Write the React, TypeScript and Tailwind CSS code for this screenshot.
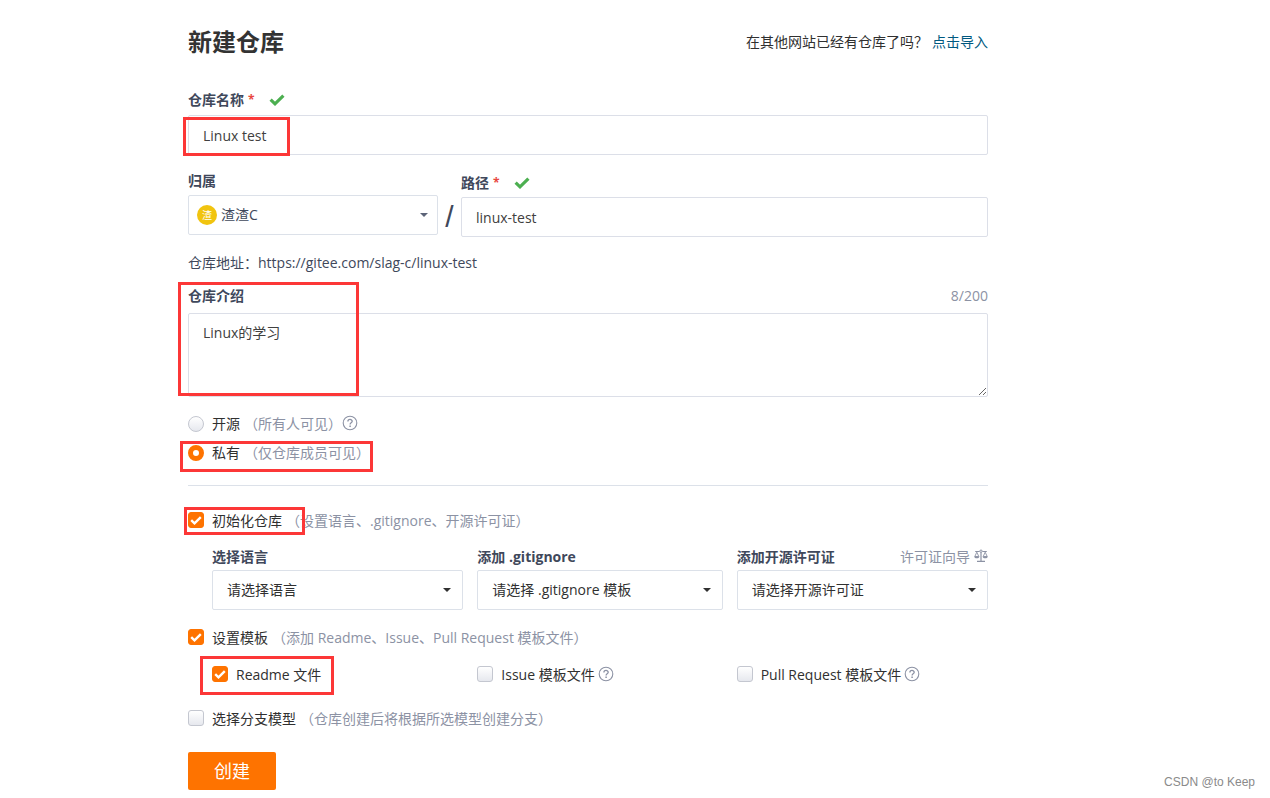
import React, { useState } from 'react';
import clsx from 'clsx';

interface MarkProps {
  className: string;
}

// Red highlight frame laid over a part of the form
const Mark: React.FC<MarkProps> = ({ className }) => (
  <span aria-hidden="true" className={clsx('pointer-events-none absolute z-10 border-3 border-[#fc3737]', className)} />
);

const TickIcon: React.FC<{ className?: string }> = ({ className }) => (
  <svg viewBox="0 0 16 12" className={className} fill="none" stroke="currentColor" aria-hidden="true">
    <path d="M1.6 5.6 L6 9.8 L14.4 1.6" strokeWidth="3.2" />
  </svg>
);

const HelpIcon: React.FC = () => (
  <svg viewBox="0 0 16 16" className="mb-0.5 h-4 w-4 shrink-0 text-[#8c92a4]" fill="none" stroke="currentColor" aria-hidden="true">
    <circle cx="8" cy="8" r="6.8" strokeWidth="1.1" />
    <path d="M5.9 6.4 C5.9 3.8 10.2 3.8 10.2 6.3 C10.2 7.8 8.1 7.8 8.1 9.4" strokeWidth="1.3" />
    <path d="M8.1 10.5 V12" strokeWidth="1.5" />
  </svg>
);

const ScaleIcon: React.FC = () => (
  <svg viewBox="0 0 14 14" className="mb-0.5 h-3.5 w-3.5 shrink-0" fill="none" stroke="currentColor" aria-hidden="true">
    <path d="M1.2 2.5 H5.5 M8.5 2.5 H12.8 M7 3.5 V12 M3 12.4 H11" strokeWidth="1.2" />
    <circle cx="7" cy="2.2" r="1.2" strokeWidth="1" />
    <path d="M2.8 3.2 L0.8 7.5 H4.8 Z M11.2 3.2 L9.2 7.5 H13.2 Z" strokeWidth="0.9" />
    <path d="M0.2 7.4 H5.4 C5.2 10 0.4 10 0.2 7.4 Z M8.6 7.4 H13.8 C13.6 10 8.8 10 8.6 7.4 Z" fill="currentColor" stroke="none" />
  </svg>
);

const Required: React.FC = () => (
  <>
    <span className="ml-1 text-xs text-[#e8473f]">*</span>
    <TickIcon className="ml-3.5 h-3 w-4 text-[#4caf50]" />
  </>
);

interface SelectBoxProps {
  id: string;
  option: string;
  className?: string;
  caretClassName?: string;
}

const SelectBox: React.FC<SelectBoxProps> = ({ id, option, className, caretClassName }) => (
  <div className="grid items-center">
    <select
      id={id}
      className={clsx('col-start-1 row-start-1 h-10 w-full appearance-none rounded-xs border border-[#dce1e9] bg-white pr-8', className)}
    >
      <option>{option}</option>
    </select>
    <svg
      viewBox="0 0 8 4"
      className={clsx('pointer-events-none col-start-1 row-start-1 h-1 w-2 justify-self-end', caretClassName)}
      fill="currentColor"
      aria-hidden="true"
    >
      <path d="M0 0 H8 L4 4 Z" />
    </svg>
  </div>
);

interface CheckItemProps {
  label: string;
  hint?: string;
  defaultChecked?: boolean;
  help?: boolean;
}

const CheckItem: React.FC<CheckItemProps> = ({ label, hint, defaultChecked, help }) => (
  <label className="flex h-5 items-center">
    <span className="mr-2 mb-0.5 grid place-items-center">
      <input
        type="checkbox"
        defaultChecked={defaultChecked}
        className="peer col-start-1 row-start-1 h-4 w-4 appearance-none rounded-[3px] border border-[#c4c7d0] bg-linear-to-b from-white to-[#e6e8ee] checked:border-[#fe7300] checked:bg-[#fe7300] checked:bg-none"
      />
      <TickIcon className="invisible col-start-1 row-start-1 h-[9px] w-3 text-white peer-checked:visible" />
    </span>
    <span>{label}</span>
    {hint && <span className="ml-1 text-[#8c92a4]">{hint}</span>}
    {help && <span className="ml-[3px]"><HelpIcon /></span>}
  </label>
);

interface RadioItemProps {
  value: string;
  label: string;
  hint: string;
  checked: boolean;
  onChange: (value: string) => void;
  help?: boolean;
}

const RadioItem: React.FC<RadioItemProps> = ({ value, label, hint, checked, onChange, help }) => (
  <label className="flex h-5 items-center">
    <input
      type="radio"
      name="visibility"
      checked={checked}
      onChange={() => onChange(value)}
      className="mr-2 h-4 w-4 appearance-none rounded-full border border-[#c4c7d0] bg-linear-to-b from-white to-[#e6e8ee] checked:border-5 checked:border-[#fe7300] checked:bg-white checked:bg-none"
    />
    <span>{label}</span>
    <span className="ml-1 text-[#8c92a4]">{hint}</span>
    {help && <HelpIcon />}
  </label>
);

const labelClass = 'flex h-5 items-center font-bold text-[#40485b]';
const inputClass = 'block w-full rounded-xs border border-[#dcdfe8] bg-white px-3.5 text-[#404040]';

const App: React.FC = () => {
  const [visibility, setVisibility] = useState('private');
  const [intro, setIntro] = useState('Linux的学习');

  return (
    <div className="relative min-h-screen bg-white font-['Open_Sans','Noto_Sans_CJK_SC',sans-serif] text-sm leading-5 text-[#303030]">
      <form className="max-w-[988px] pt-6 pb-2 pl-[188px]" onSubmit={(e) => e.preventDefault()}>
        <header className="mb-[30px] flex h-9 items-center justify-between">
          <h1 className="text-2xl font-bold text-[#333333]">新建仓库</h1>
          <p>
            在其他网站已经有仓库了吗？
            <a href="#import" className="ml-1 text-[#005980]">点击导入</a>
          </p>
        </header>

        {/* Name */}
        <label htmlFor="name" className={clsx(labelClass, 'mb-[5px]')}>
          仓库名称
          <Required />
        </label>
        <div className="relative">
          <input id="name" defaultValue="Linux test" className={clsx(inputClass, 'h-10')} />
          <Mark className="top-0.5 -left-[5px] h-[39px] w-[107px]" />
        </div>

        {/* Owner and path */}
        <div className="mt-4 flex">
          <div className="w-[250px]">
            <label htmlFor="owner" className={clsx(labelClass, 'mb-1')}>归属</label>
            <div className="grid items-center">
              <div className="col-start-1 row-start-1">
                <SelectBox id="owner" option="渣渣C" className="pl-8 text-[#40485b]" caretClassName="mr-2.5 text-[#5c6478]" />
              </div>
              <span className="pointer-events-none col-start-1 row-start-1 ml-[9px] flex h-5 w-5 items-center justify-center rounded-full bg-[#f1c40f] text-[10px] text-white">
                渣
              </span>
            </div>
          </div>
          <span className="flex w-[23px] justify-center pt-[34px] font-['Liberation_Sans',sans-serif] text-3xl leading-6 text-[#40485b]">/</span>
          <div className="flex-1">
            <label htmlFor="path" className={clsx(labelClass, 'mt-0.5 mb-1')}>
              路径
              <Required />
            </label>
            <input id="path" defaultValue="linux-test" className={clsx(inputClass, 'h-10')} />
          </div>
        </div>

        <p className="mt-4 text-[#40485b]">仓库地址：https://gitee.com/slag-c/linux-test</p>

        {/* Intro */}
        <div className="relative mt-[13px]">
          <div className="mb-[7px] flex justify-between">
            <label htmlFor="intro" className={labelClass}>仓库介绍</label>
            <span className="text-[#8c92a4]">{intro.length}/200</span>
          </div>
          <textarea
            id="intro"
            value={intro}
            maxLength={200}
            onChange={(e) => setIntro(e.target.value)}
            className={clsx(inputClass, 'h-[84px] resize-y py-[9px]')}
          />
          <Mark className="-top-1 -left-2.5 h-[114px] w-[181px]" />
        </div>

        {/* Visibility */}
        <div className="mt-[17px] flex flex-col items-start gap-[9px]">
          <RadioItem value="public" label="开源" hint="（所有人可见）" checked={visibility === 'public'} onChange={setVisibility} help />
          <div className="relative">
            <RadioItem value="private" label="私有" hint="（仅仓库成员可见）" checked={visibility === 'private'} onChange={setVisibility} />
            <Mark className="-top-0.5 -left-2 h-[31px] w-[193px]" />
          </div>
        </div>

        <hr className="mt-[22px] border-[#dce1e9]" />

        {/* Initialize */}
        <div className="relative mt-[25px]">
          <CheckItem label="初始化仓库" hint="（设置语言、.gitignore、开源许可证）" defaultChecked />
          <Mark className="-top-1 -left-1 h-7 w-[121px]" />
        </div>
        <div className="mt-4 grid grid-cols-[251fr_245fr_251fr] gap-3.5 pl-6">
          <div>
            <label htmlFor="language" className={clsx(labelClass, 'mb-[3px]')}>选择语言</label>
            <SelectBox id="language" option="请选择语言" className="pl-3.5" caretClassName="mr-3" />
          </div>
          <div>
            <label htmlFor="gitignore" className={clsx(labelClass, 'mb-[3px]')}>添加 .gitignore</label>
            <SelectBox id="gitignore" option="请选择 .gitignore 模板" className="pl-3.5" caretClassName="mr-3" />
          </div>
          <div>
            <div className="mb-[3px] flex justify-between">
              <label htmlFor="license" className={labelClass}>添加开源许可证</label>
              <a href="#license-guide" className="flex items-center gap-1 text-[#8c92a4]">
                许可证向导
                <ScaleIcon />
              </a>
            </div>
            <SelectBox id="license" option="请选择开源许可证" className="pl-3.5" caretClassName="mr-3" />
          </div>
        </div>

        {/* Templates */}
        <div className="mt-[18px]">
          <CheckItem label="设置模板" hint="（添加 Readme、Issue、Pull Request 模板文件）" defaultChecked />
        </div>
        <div className="mt-[17px] grid grid-cols-[251fr_245fr_251fr] gap-3.5 pl-6">
          <div className="relative">
            <CheckItem label="Readme 文件" defaultChecked />
            <Mark className="-top-[9px] -left-3 h-[39px] w-[134px]" />
          </div>
          <CheckItem label="Issue 模板文件" help />
          <CheckItem label="Pull Request 模板文件" help />
        </div>

        {/* Branch model */}
        <div className="mt-6">
          <CheckItem label="选择分支模型" hint="（仓库创建后将根据所选模型创建分支）" />
        </div>

        <button type="submit" className="mt-[23px] h-[38px] w-[88px] rounded-xs bg-[#fe7300] text-lg text-white">
          创建
        </button>
      </form>

      <span className="absolute right-[15px] bottom-2 font-['Liberation_Sans',sans-serif] text-xs text-[#8a8a8a]">
        CSDN @to Keep
      </span>
    </div>
  );
};

export default App;
